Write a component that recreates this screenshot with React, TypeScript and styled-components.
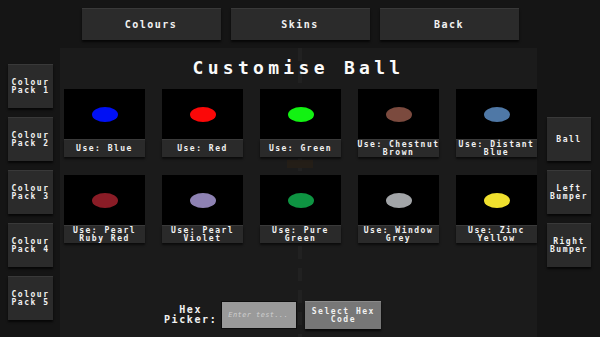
import styled, { createGlobalStyle } from "styled-components";

const GlobalStyle = createGlobalStyle`
    html, body {
        margin: 0;
        padding: 0;
        background: #151515;
    }
    body {
        font-family: "DejaVu Sans Mono", "Liberation Mono", monospace;
        font-weight: bold;
        color: #f2f2f2;
    }
`;

const swatches = [
    { name: "Blue", color: "#0010f4" },
    { name: "Red", color: "#fb0808" },
    { name: "Green", color: "#12f212" },
    { name: "Chestnut Brown", color: "#7b4a3e" },
    { name: "Distant Blue", color: "#4f78a6" },
    { name: "Pearl Ruby Red", color: "#8a1c26" },
    { name: "Pearl Violet", color: "#8e82b3" },
    { name: "Pure Green", color: "#0e9442" },
    { name: "Window Grey", color: "#a2a5a8" },
    { name: "Zinc Yellow", color: "#f0e02e" },
];

const Screen = styled.div`
    width: 600px;
    height: 337px;
    overflow: hidden;
    display: flex;
    flex-direction: column;
`;

const TopBar = styled.div`
    display: flex;
    justify-content: center;
    gap: 10px;
    padding-top: 8px;
    height: 32px;
`;

const Button = styled.button<{ $w?: number; $h?: number; $size?: number }>`
    width: ${p => p.$w ?? 45}px;
    height: ${p => p.$h ?? 44}px;
    padding: 0;
    margin: 0;
    background: #2b2b2b;
    border: none;
    border-top: 1px solid #393939;
    box-shadow: 0 2px 2px rgba(0, 0, 0, 0.7);
    color: #f2f2f2;
    font-family: inherit;
    font-weight: bold;
    font-size: ${p => p.$size ?? 8}px;
    letter-spacing: 1.5px;
    line-height: 8px;
    text-align: center;
    display: flex;
    flex-direction: column;
    align-items: center;
    justify-content: center;
    white-space: pre-line;
`;

const Main = styled.div`
    flex: 1;
    display: flex;
    margin-top: 8px;
`;

const SideCol = styled.div<{ $top: number; $left: number }>`
    width: ${p => (p.$left === 8 ? 60 : 63)}px;
    box-sizing: border-box;
    padding: ${p => p.$top}px 0 0 ${p => p.$left}px;
    display: flex;
    flex-direction: column;
    gap: 9px;
`;

const Panel = styled.div`
    position: relative;
    width: 477px;
    box-sizing: border-box;
    padding: 9px 0 0 4px;
    background: #1b1b1b;
    display: flex;
    flex-direction: column;

    &::before {
        content: "";
        position: absolute;
        left: 238px;
        top: 0;
        bottom: 0;
        width: 4px;
        background: repeating-linear-gradient(
            to bottom,
            #212121 0px,
            #212121 13px,
            transparent 13px,
            transparent 22px
        );
    }
`;

const Ghost = styled.div`
    position: absolute;
    left: 227px;
    top: 112px;
    width: 26px;
    height: 8px;
    background: #241e17;
`;

const Title = styled.h1`
    position: relative;
    margin: 0 0 0 -4px;
    height: 22px;
    font-size: 18px;
    line-height: 22px;
    letter-spacing: 4.3px;
    text-align: center;
    font-weight: bold;
    color: #fafafa;
`;

const Grid = styled.div`
    position: relative;
    margin-top: 10px;
    display: grid;
    grid-template-columns: repeat(5, 81px);
    column-gap: 17px;
    row-gap: 18px;
`;

const Card = styled.div`
    display: flex;
    flex-direction: column;
`;

const Swatch = styled.div`
    height: 50px;
    background: #000;
    display: flex;
    align-items: center;
    justify-content: center;
`;

const Dot = styled.div<{ $c: string }>`
    width: 26px;
    height: 15px;
    border-radius: 50%;
    background: ${p => p.$c};
`;

const Label = styled.div`
    height: 18px;
    background: #2a2a2a;
    border-top: 1px solid #3a3a3a;
    box-sizing: border-box;
    box-shadow: 0 2px 2px rgba(0, 0, 0, 0.6);
    display: flex;
    flex-direction: column;
    align-items: center;
    justify-content: center;
    font-size: 8px;
    letter-spacing: 1.5px;
    line-height: 8px;
    text-align: center;
    white-space: nowrap;
`;

const HexRow = styled.div`
    position: relative;
    margin-top: 58px;
    padding-left: 100px;
    display: flex;
    align-items: center;
    gap: 4px;
`;

const HexLabel = styled.div`
    font-size: 10px;
    letter-spacing: 1.6px;
    line-height: 10px;
    text-align: center;
`;

const HexInput = styled.input`
    width: 76px;
    height: 28px;
    box-sizing: border-box;
    margin: 0 4px 0 0;
    padding: 0 6px;
    background: #9a9a9a;
    border: 1px solid #0e0e0e;
    color: #222;
    font-family: inherit;
    font-size: 7px;
    font-style: italic;
    letter-spacing: 0.4px;

    &::placeholder {
        color: #cfcfcf;
    }
`;

const HexButton = styled(Button)`
    background: #777;
    border-top: 1px solid #8a8a8a;
`;

export default function App() {
    return (
        <>
            <GlobalStyle />
            <Screen>
                <TopBar>
                    <Button $w={139} $h={32} $size={10}>Colours</Button>
                    <Button $w={139} $h={32} $size={10}>Skins</Button>
                    <Button $w={139} $h={32} $size={10}>Back</Button>
                </TopBar>
                <Main>
                    <SideCol $top={16} $left={8}>
                        {[1, 2, 3, 4, 5].map(n => (
                            <Button key={n}>{`Colour\nPack ${n}`}</Button>
                        ))}
                    </SideCol>
                    <Panel>
                        <Ghost />
                        <Title>Customise Ball</Title>
                        <Grid>
                            {swatches.map(s => (
                                <Card key={s.name}>
                                    <Swatch>
                                        <Dot $c={s.color} />
                                    </Swatch>
                                    <Label>
                                        {s.name.includes(" ") ? (
                                            <>
                                                <span>Use: {s.name.split(" ")[0]}</span>
                                                <span>{s.name.split(" ").slice(1).join(" ")}</span>
                                            </>
                                        ) : (
                                            <span>Use: {s.name}</span>
                                        )}
                                    </Label>
                                </Card>
                            ))}
                        </Grid>
                        <HexRow>
                            <HexLabel>Hex<br />Picker:</HexLabel>
                            <HexInput placeholder="Enter test..." />
                            <HexButton $w={76} $h={28}>{"Select Hex\nCode"}</HexButton>
                        </HexRow>
                    </Panel>
                    <SideCol $top={69} $left={10}>
                        <Button $w={44}>Ball</Button>
                        <Button $w={44}>{"Left\nBumper"}</Button>
                        <Button $w={44}>{"Right\nBumper"}</Button>
                    </SideCol>
                </Main>
            </Screen>
        </>
    );
}
